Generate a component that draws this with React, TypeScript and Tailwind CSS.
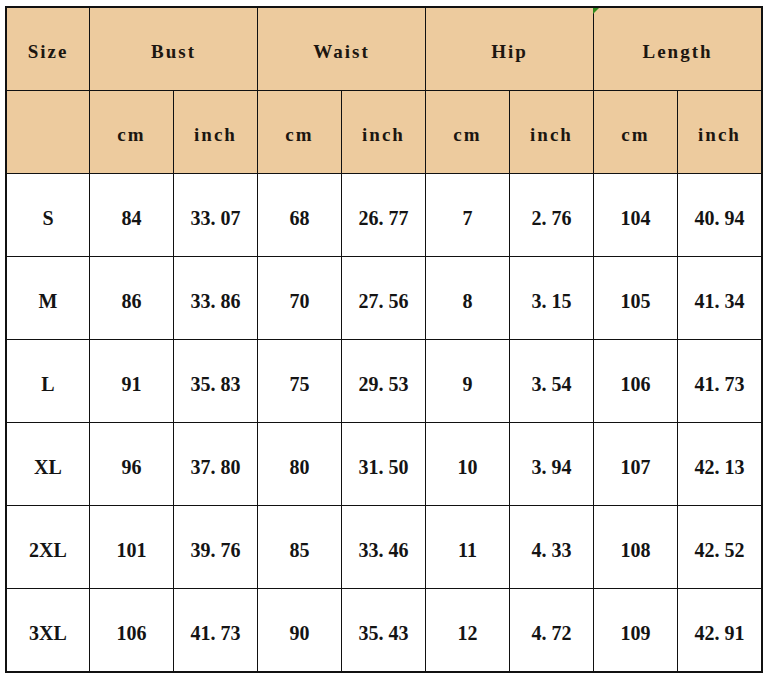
const rows: string[][] = [
  ["S", "84", "33.07", "68", "26.77", "7", "2.76", "104", "40.94"],
  ["M", "86", "33.86", "70", "27.56", "8", "3.15", "105", "41.34"],
  ["L", "91", "35.83", "75", "29.53", "9", "3.54", "106", "41.73"],
  ["XL", "96", "37.80", "80", "31.50", "10", "3.94", "107", "42.13"],
  ["2XL", "101", "39.76", "85", "33.46", "11", "4.33", "108", "42.52"],
  ["3XL", "106", "41.73", "90", "35.43", "12", "4.72", "109", "42.91"],
];

const groups = ["Bust", "Waist", "Hip", "Length"];

function Num({ value }: { value: string }) {
  const [a, b] = value.split(".");
  if (b === undefined) return <>{value}</>;
  return (
    <>
      {a}
      <span className="mr-[5px]">.</span>
      {b}
    </>
  );
}

export default function App() {
  const head = "font-['Liberation_Serif',serif] font-bold text-[19px] tracking-[2px] text-[#1c1610]";
  const cell = "flex items-center justify-center pt-[6px] border-[#111]";

  return (
    <div className="w-[766px] h-[679px] bg-white pt-[6px] pl-[5px]">
      <div className="w-[758px] border-2 border-[#111]">
        <div className="grid grid-cols-[83px_repeat(7,84px)_83px] grid-rows-[repeat(7,83px)_82px]">
          <div className={`${cell} ${head} bg-[#edcb9e] border-r border-b`}>Size</div>
          {groups.map((g, i) => (
            <div
              key={g}
              className={`${cell} ${head} relative col-span-2 bg-[#edcb9e] border-b ${i < 3 ? "border-r" : ""}`}
            >
              {g === "Length" && (
                <svg className="absolute -left-px top-0" width="6" height="6" viewBox="0 0 6 6">
                  <polygon points="0,0 6,0 0,6" fill="#2f8a1c" />
                </svg>
              )}
              {g}
            </div>
          ))}

          <div className={`${cell} bg-[#edcb9e] border-r border-b`} />
          {groups.map((g, i) => (
            <div key={g} className="contents">
              <div className={`${cell} ${head} bg-[#edcb9e] border-r border-b`}>cm</div>
              <div className={`${cell} ${head} bg-[#edcb9e] border-b ${i < 3 ? "border-r" : ""}`}>
                inch
              </div>
            </div>
          ))}

          {rows.map((r, ri) =>
            r.map((v, ci) => (
              <div
                key={`${ri}-${ci}`}
                className={`${cell} font-['Liberation_Serif',serif] font-bold text-[20px] text-[#141414] ${
                  ci < 8 ? "border-r" : ""
                } ${ri < rows.length - 1 ? "border-b" : ""}`}
              >
                <Num value={v} />
              </div>
            ))
          )}
        </div>
      </div>
    </div>
  );
}
